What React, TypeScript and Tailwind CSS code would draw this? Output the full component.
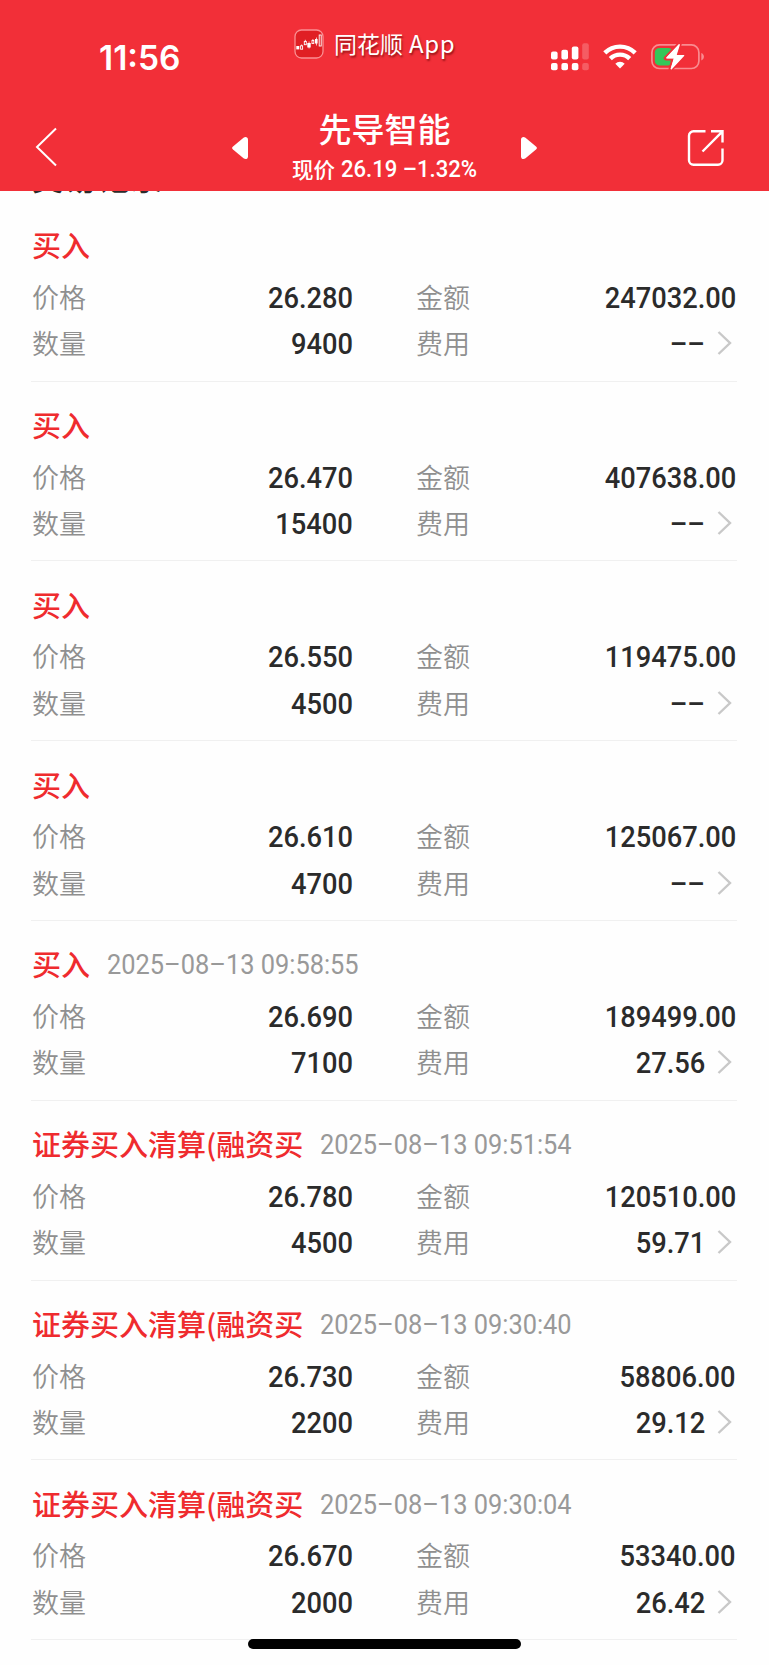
type Trade = {
  type: string;
  time?: string;
  price: string;
  quantity: string;
  amount: string;
  fee: string;
};

const TRADES: Trade[] = [
  { type: '买入', price: '26.280', quantity: '9400', amount: '247032.00', fee: '––' },
  { type: '买入', price: '26.470', quantity: '15400', amount: '407638.00', fee: '––' },
  { type: '买入', price: '26.550', quantity: '4500', amount: '119475.00', fee: '––' },
  { type: '买入', price: '26.610', quantity: '4700', amount: '125067.00', fee: '––' },
  { type: '买入', time: '2025–08–13 09:58:55', price: '26.690', quantity: '7100', amount: '189499.00', fee: '27.56' },
  { type: '证券买入清算(融资买', time: '2025–08–13 09:51:54', price: '26.780', quantity: '4500', amount: '120510.00', fee: '59.71' },
  { type: '证券买入清算(融资买', time: '2025–08–13 09:30:40', price: '26.730', quantity: '2200', amount: '58806.00', fee: '29.12' },
  { type: '证券买入清算(融资买', time: '2025–08–13 09:30:04', price: '26.670', quantity: '2000', amount: '53340.00', fee: '26.42' },
];

const AppIcon = () => (
  <svg width="30" height="30" viewBox="0 0 30 30" fill="none">
    <rect x="1" y="1" width="28" height="28" rx="6.5" fill="#e01f24" stroke="#fa8f92" strokeWidth="1.3" />
    <g fill="#fff">
      <rect x="2.3" y="17" width="3" height="3.4" />
      <rect x="13.3" y="14" width="3.4" height="4.5" />
      <rect x="21" y="10" width="2.6" height="4.5" />
      <path d="M22 8.5h.7v8H22zM14.7 12.5h.7v7h-.7z" />
    </g>
    <g stroke="#fff" strokeWidth="0.9">
      <rect x="6.6" y="16.8" width="2" height="3.4" />
      <rect x="10.3" y="12.5" width="2" height="3.2" />
      <rect x="18" y="11.5" width="1.8" height="3" />
      <rect x="25.2" y="6" width="2" height="11" />
      <path d="M11.3 10.8v1.7M7.6 15.6v1.2M18.9 10.2v1.3" />
    </g>
  </svg>
);

const SignalIcon = () => (
  <svg width="38" height="28" viewBox="0 0 38 28" fill="#fff">
    <rect x="0" y="8.5" width="6.6" height="8" rx="2" />
    <rect x="10.4" y="6.7" width="6.6" height="9.8" rx="2" />
    <rect x="20.8" y="3.5" width="6.6" height="13" rx="2" />
    <rect x="31.2" y="0.3" width="6.6" height="16.2" rx="2" opacity="0.22" />
    <rect x="0" y="20" width="6.6" height="7.3" rx="2" />
    <rect x="10.4" y="20" width="6.6" height="7.3" rx="2" />
    <rect x="20.8" y="20" width="6.6" height="7.3" rx="2" />
    <rect x="31.2" y="20" width="6.6" height="7.3" rx="2" opacity="0.22" />
  </svg>
);

const WifiIcon = () => (
  <svg width="34" height="25" viewBox="0 0 34 25" fill="none" stroke="#fff" strokeWidth="4.4">
    <path d="M1.8 8.9a21.6 21.6 0 0 1 30.4 0" />
    <path d="M7.3 14.6a13.8 13.8 0 0 1 19.4 0" />
    <path d="M17 24.5l-4.7-4.7a6.6 6.6 0 0 1 9.4 0z" fill="#fff" stroke="none" />
  </svg>
);

const BatteryIcon = () => (
  <svg width="54" height="28" viewBox="0 0 54 28" fill="none">
    <rect x="0.9" y="1.9" width="47" height="23.6" rx="7.5" stroke="#f98c90" strokeWidth="1.7" />
    <path d="M50.3 10v7.4c1.6-.6 2.6-2 2.6-3.7s-1-3.1-2.6-3.7z" fill="#f98c90" />
    <rect x="3.8" y="5" width="18" height="17.4" rx="4.5" fill="#34c759" />
    <path
      d="M28.4 1.2L15 15.2h8l-3.3 11.1L33 12.3h-8z"
      fill="#fff"
      stroke="#f22f38"
      strokeWidth="4.5"
      strokeLinejoin="round"
      paintOrder="stroke"
    />
    <path
      d="M28.2 1.8L16 14.8h7.7l-3.4 11L32.6 12.6h-7.8z"
      fill="#fff"
      stroke="#fff"
      strokeWidth="1.4"
      strokeLinejoin="round"
    />
  </svg>
);

const StatusBar = () => (
  <div className="flex h-[100px] items-start">
    <div className="ml-[99px] mt-[38px] w-[82px] whitespace-nowrap text-[33.5px] font-semibold leading-10 font-['Inter',sans-serif]">
      11:56
    </div>
    <div className="ml-[113px] mt-[29px] flex w-[257px] items-start">
      <AppIcon />
      <span className="-mt-0.5 ml-2.5 flex items-center whitespace-nowrap text-[23px] leading-8 [text-shadow:1px_2px_2px_rgba(90,0,0,0.6)]">
        同花顺
        <span className="ml-1.5 text-[24px] tracking-[0.6px]">App</span>
      </span>
    </div>
    <div className="mt-[43px] flex">
      <SignalIcon />
      <div className="ml-3.5 mt-px">
        <WifiIcon />
      </div>
      <div className="ml-[14px]">
        <BatteryIcon />
      </div>
    </div>
  </div>
);

const NavBar = () => (
  <div className="flex h-[91px] items-start">
    <button className="ml-[35px] mt-[27px]">
      <svg width="22" height="40" viewBox="0 0 22 40" fill="none" stroke="#fff" strokeWidth="2">
        <path d="M21 1.5L2 20l19 18.5" />
      </svg>
    </button>
    <button className="ml-[175px] mt-[36px]">
      <svg width="16" height="24" viewBox="0 0 16 24" fill="#fff">
        <path d="M1 10.5L11.5 1.8C13.4.3 16 1 16 3.6v16.8c0 2.6-2.6 3.3-4.5 1.8L1 13.5c-1.2-1-1.2-2 0-3z" />
      </svg>
    </button>
    <div className="mt-[5px] flex w-[273px] flex-col items-center whitespace-nowrap">
      <h1 className="text-[33px] font-medium leading-[46px]">先导智能</h1>
      <div className="mt-px flex items-center text-[21.5px] font-medium leading-[34px]">
        现价
        <span className="ml-1.5 w-[136px] font-['Roboto',sans-serif] text-[23.5px]">
          <span className="inline-block origin-left scale-x-[0.94]">26.19 –1.32%</span>
        </span>
      </div>
    </div>
    <button className="mt-[36px]">
      <svg width="16" height="24" viewBox="0 0 16 24" fill="#fff">
        <path d="M15 10.5L4.5 1.8C2.6.3 0 1 0 3.6v16.8c0 2.6 2.6 3.3 4.5 1.8L15 13.5c1.2-1 1.2-2 0-3z" />
      </svg>
    </button>
    <button className="ml-[150px] mt-[29px]">
      <svg width="38" height="38" viewBox="0 0 38 38" fill="none" stroke="#fff" strokeWidth="2.4">
        <path d="M18.5 2.3H6.5A4.5 4.5 0 0 0 2 6.8v24.5a4.5 4.5 0 0 0 4.5 4.5h24.5a4.5 4.5 0 0 0 4.5-4.5V19.5" />
        <path d="M24 2.3H35.5V13.5M35.5 2.3L15.5 22.5" />
      </svg>
    </button>
  </div>
);

const Num = ({ children }: { children: string }) => (
  <span className="mt-px inline-block origin-right scale-x-[0.925] font-['Roboto',sans-serif] text-[29.5px] font-medium text-[#2b2b2b]">
    {children}
  </span>
);

const Label = ({ children }: { children: string }) => (
  <span className="text-[27px] font-[350] text-[#8f8f8f]">{children}</span>
);

const TradeRow = ({ trade }: { trade: Trade }) => (
  <li className="h-[179.8px] border-b border-[#f0f0f0] pl-px pt-[24px]">
    <div className="flex h-10 items-center whitespace-nowrap">
      <span className="-mt-0.5 text-[29px] font-medium text-[#ef2b2e]">{trade.type}</span>
      {trade.time && (
        <span className="ml-[17px] mt-px inline-block origin-left scale-x-[0.94] font-['Roboto',sans-serif] text-[27px] text-[#999]">
          {trade.time}
        </span>
      )}
    </div>
    <div className="mt-2 grid grid-cols-[321px_320px] gap-x-[63px] leading-[46px]">
      <div className="flex h-[46.3px] justify-between">
        <Label>价格</Label>
        <Num>{trade.price}</Num>
      </div>
      <div className="flex h-[46.3px] justify-between">
        <Label>金额</Label>
        <Num>{trade.amount}</Num>
      </div>
      <div className="flex h-[46.3px] justify-between">
        <Label>数量</Label>
        <Num>{trade.quantity}</Num>
      </div>
      <div className="flex h-[46.3px]">
        <Label>费用</Label>
        <span className="ml-auto flex">
          <Num>{trade.fee}</Num>
        </span>
        <svg className="ml-[11px] mr-1 mt-[11px]" width="16" height="24" viewBox="0 0 16 24" fill="none" stroke="#c8c8c8" strokeWidth="2.4">
          <path d="M2.5 1L14 12 2.5 23" />
        </svg>
      </div>
    </div>
  </li>
);

export default function App() {
  return (
    <div className="relative h-[1665px] w-[769px] overflow-hidden bg-[#fefefe] font-['Noto_Sans_CJK_SC',sans-serif]">
      <header className="relative z-10 h-[191px] bg-[#f22f38] text-white">
        <StatusBar />
        <NavBar />
      </header>
      <main className="pl-[31px] pr-8">
        {/* Section title, scrolled under the header */}
        <h2 className="-mt-[31px] mb-[9.6px] h-[32.3px] text-[33px] font-bold leading-8 text-[#2b2b2b]">交易记录</h2>
        <ul>
          {TRADES.map((trade, i) => (
            <TradeRow key={i} trade={trade} />
          ))}
        </ul>
      </main>
      {/* Home indicator */}
      <div className="absolute bottom-4 left-[248px] h-2.5 w-[273px] rounded-full bg-black" />
    </div>
  );
}
